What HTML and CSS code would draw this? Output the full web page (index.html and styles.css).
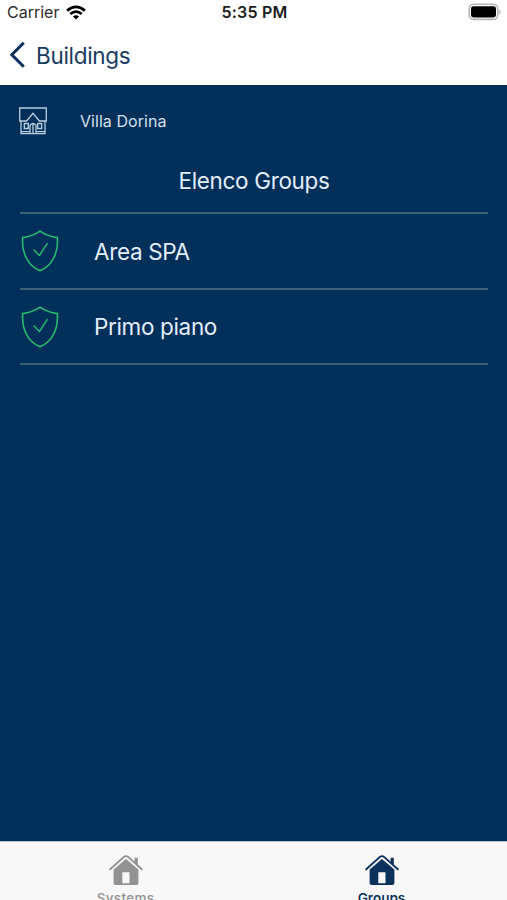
FILE: index.html
```html
<!DOCTYPE html>
<html lang="en">
<head>
<meta charset="utf-8">
<title>Villa Dorina</title>
<link rel="stylesheet" href="styles.css">
</head>
<body>
<div class="app">
  <header class="top">
    <div class="status">
      <div class="carrier"><span>Carrier</span>
        <svg class="wifi" viewBox="0 0 20 15"><g fill="none" stroke="#000" stroke-width="2.7"><path d="M1.1 5.6Q10-2 18.9 5.6"/><path d="M4.3 9Q10 4.2 15.7 9"/></g><path d="M6.900 11.400Q10 8.900 13.100 11.400L10 14.600Z"/></svg>
      </div>
      <time class="clock">5:35 PM</time>
      <svg class="battery" viewBox="0 0 34 18"><rect x="1.200" y="1.200" width="28.600" height="15.200" rx="4.500" fill="#fff" stroke="#b5b5b5" stroke-width="1.600"/><rect x="3" y="3.200" width="25" height="11.200" rx="2.400"/><path d="M31.200 6.200Q34 8.800 31.200 11.400Z" fill="#b5b5b5"/></svg>
    </div>
    <nav class="back">
      <svg class="chevron" viewBox="0 0 17 28"><path d="M14.800 1.800 2.800 13.800l12 12" fill="none" stroke="#0b315c" stroke-width="3"/></svg>
      <span>Buildings</span>
    </nav>
  </header>
  <main class="content">
    <div class="building">
      <svg class="villa" viewBox="0 0 28 28"><g fill="none" stroke="#b9cee2" stroke-width="1.300"><path d="M.7 1h26.600v13h-6.900L14 6.300 7.600 14H.7Z"/><path d="M2 14v12.700h24V14M2 24.600h8.700M17.300 24.600H26"/><path d="M5.300 16.500h4v5h-4ZM18.700 16.500h4v5h-4Z"/><path d="M11 26.500v-8.200q3-4 6 0v8.200M14 17v9.500"/></g></svg>
      <span>Villa Dorina</span>
    </div>
    <h1 class="title"><span>Elenco Groups</span></h1>
    <ul class="groups">
      <li><svg class="shield" viewBox="0 0 40 44"><g fill="none" stroke="#25bd70" stroke-width="1.600" stroke-linejoin="round" stroke-linecap="round"><path d="M20 2.200Q12.500 7.500 2.600 8.600C1.700 24 7.500 36.500 20 41.800C32.500 36.500 38.300 24 37.400 8.600Q27.500 7.500 20 2.200Z"/><path d="M14 21l5.400 5.500 7.800-11.900" stroke-width="1.400"/></g></svg><span>Area SPA</span></li>
      <li><svg class="shield" viewBox="0 0 40 44"><g fill="none" stroke="#25bd70" stroke-width="1.600" stroke-linejoin="round" stroke-linecap="round"><path d="M20 2.200Q12.500 7.500 2.600 8.600C1.700 24 7.500 36.500 20 41.800C32.500 36.500 38.300 24 37.400 8.600Q27.500 7.500 20 2.200Z"/><path d="M14 21l5.400 5.500 7.800-11.900" stroke-width="1.400"/></g></svg><span>Primo piano</span></li>
    </ul>
  </main>
  <footer class="tabs">
    <div class="tab">
      <svg class="home" viewBox="0 0 34 32"><path fill="none" stroke="currentColor" stroke-width="1.900" stroke-linejoin="round" stroke-linecap="round" d="M1.200 15.300 14.900 2.900Q17 1.300 19.100 2.900L32.800 15.300"/><path fill="currentColor" d="M25.600 3.800h3.200v7.300l-3.200-2.900Z"/><path fill="currentColor" fill-rule="evenodd" d="M4.600 15.500 17 5.100l12.400 10.400V29q0 2-2 2H6.600q-2 0-2-2ZM13.300 18.300v11h7.200v-11Z"/></svg>
      <span>Systems</span>
    </div>
    <div class="tab active">
      <svg class="home" viewBox="0 0 34 32"><path fill="none" stroke="currentColor" stroke-width="1.900" stroke-linejoin="round" stroke-linecap="round" d="M1.200 15.300 14.900 2.900Q17 1.300 19.100 2.900L32.800 15.300"/><path fill="currentColor" d="M25.600 3.800h3.200v7.300l-3.200-2.900Z"/><path fill="currentColor" fill-rule="evenodd" d="M4.600 15.500 17 5.100l12.400 10.400V29q0 2-2 2H6.600q-2 0-2-2ZM13.300 18.300v11h7.200v-11Z"/></svg>
      <span>Groups</span>
    </div>
  </footer>
</div>
</body>
</html>
```
FILE: styles.css
```css
* { box-sizing: border-box; }
body { margin: 0; font-family: Inter, "Liberation Sans", sans-serif; }
svg { display: block; flex: none; }
.app { width: 507px; height: 900px; display: flex; flex-direction: column; overflow: hidden; background: #002f59; }
.top { height: 85px; flex: none; background: #fff; }
.status { height: 24px; display: grid; grid-template-columns: 1fr auto 1fr; align-items: center; padding: 0 5px 0 7px; }
.carrier { display: flex; align-items: center; gap: 7px; font-size: 16px; color: #2c2c2c; }
.wifi { width: 20px; height: 15px; }
.clock { font-size: 16px; font-weight: 600; color: #1c1c1c; letter-spacing: .2px; }
.battery { width: 34px; height: 18px; justify-self: end; }
.back { height: 62px; display: flex; align-items: center; gap: 10px; padding-left: 9px; font-size: 22.5px; letter-spacing: -.3px; color: #193b63; }
.chevron { width: 17px; height: 28px; }
.content { flex: 1; padding: 0 19px; color: #e4eefa; }
.building { height: 72px; display: flex; align-items: center; gap: 33px; font-size: 16px; letter-spacing: .05px; color: #d3e0ef; }
.villa { width: 28px; height: 28px; }
.title { height: 55px; margin: 0 0 0 1px; display: flex; align-items: center; justify-content: center; font-size: 22.5px; font-weight: 400; letter-spacing: -.33px; padding-bottom: 8px; }
.groups { list-style: none; margin: 0 0 0 1px; padding: 0; border-top: 2px solid #3d6375; }
.groups li { height: 76px; display: flex; align-items: center; gap: 34px; border-bottom: 2px solid #3d6375; font-size: 22.5px; letter-spacing: -.35px; }
.groups li + li { height: 75px; }
.shield { width: 40px; height: 44px; }
.tabs { height: 59px; flex: none; display: grid; grid-template-columns: 251px 256px; background: #f8f8f8; border-top: 1px solid #b2bdcb; }
.tab + .tab { padding-left: 5px; }
.tab { display: flex; flex-direction: column; align-items: center; padding-top: 12px; font-size: 13.5px; font-weight: 500; color: #929292; }
.tab span { line-height: 18px; margin-top: 3px; letter-spacing: .3px; }
.tab.active { color: #0b315c; font-weight: 600; letter-spacing: 0; }
.tab.active span { letter-spacing: 0; }
.home { width: 34px; height: 32px; }
```
